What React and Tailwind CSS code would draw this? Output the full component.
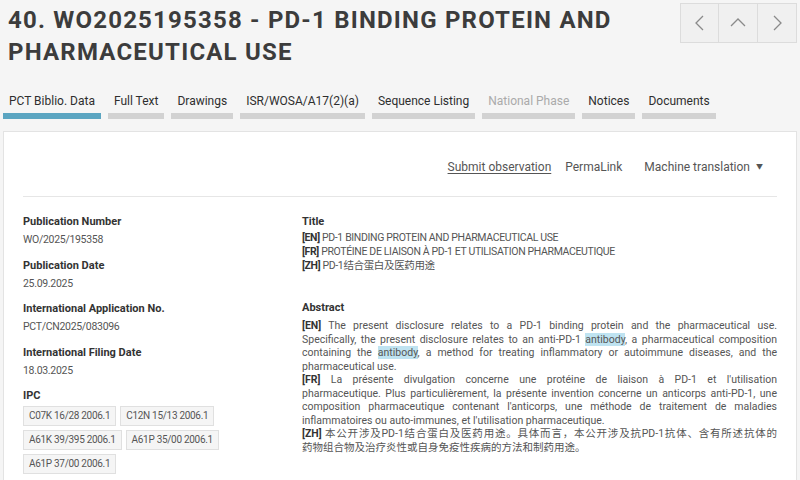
import React from "react";

const F = { fontFamily: "Roboto, 'Noto Sans CJK SC', sans-serif" };

function Chev({ d }) {
  return (
    <svg width="20" height="20" viewBox="0 0 20 20" fill="none" stroke="#8a8a8a" strokeWidth="1.3">
      <polyline points={d} />
    </svg>
  );
}

function Line({ children, last }) {
  return (
    <div className={last ? "text-justify" : "text-justify [text-align-last:justify]"}>{children}</div>
  );
}

const Hi = ({ children }) => <span className="bg-[#bfe3f1]">{children}</span>;

export default function App() {
  const tabs = [
    ["PCT Biblio. Data", "active"],
    ["Full Text", ""],
    ["Drawings", ""],
    ["ISR/WOSA/A17(2)(a)", ""],
    ["Sequence Listing", ""],
    ["National Phase", "dis"],
    ["Notices", ""],
    ["Documents", ""],
  ];
  const chips = [["C07K 16/28 2006.1", "C12N 15/13 2006.1"], ["A61K 39/395 2006.1", "A61P 35/00 2006.1"], ["A61P 37/00 2006.1"]];
  return (
    <div className="w-[800px] h-[480px] overflow-hidden bg-[#f5f5f5] text-[#333]" style={F}>
      <div className="flex justify-between pl-[8px] pr-[3px] pt-[3px]">
        <h1 className="text-[24px] leading-[32px] font-bold tracking-[1.2px] text-[#3c3c3c] pt-[1px] uppercase">
          40. WO2025195358 - PD-1 BINDING PROTEIN AND<br />PHARMACEUTICAL USE
        </h1>
        <div className="flex h-[40px] border border-[#dcdcdc] bg-[#f0f0f0]">
          <div className="w-[38px] flex items-center justify-center border-r border-[#dcdcdc]"><Chev d="13,3 6,10 13,17" /></div>
          <div className="w-[39px] flex items-center justify-center border-r border-[#dcdcdc]"><Chev d="3,13 10,6 17,13" /></div>
          <div className="w-[38px] flex items-center justify-center"><Chev d="7,3 14,10 7,17" /></div>
        </div>
      </div>
      <div className="flex gap-[7px] px-[3px] mt-[25px]">
        {tabs.map(([t, s]) => (
          <div key={t} className="flex flex-col">
            <div className={"px-[6px] text-[12px] leading-[16px] " + (s === "dis" ? "text-[#aaa]" : "text-[#2e2e2e]")}>{t}</div>
            <div className={"h-[6px] mt-[4px] " + (s === "active" ? "bg-[#5ba5c1]" : "bg-[#d2d2d2]")}></div>
          </div>
        ))}
      </div>
      <div className="mx-[3px] mt-[12px] bg-white border border-[#e3e3e3] px-[19px] h-[400px]">
        <div className="flex justify-end items-center pt-[26px] pb-[20px] border-b border-[#e6e6e6] text-[12px] text-[#555] pr-[14px]">
          <span className="underline underline-offset-2">Submit observation</span>
          <span className="ml-[14px]">PermaLink</span>
          <span className="ml-[22px]">Machine translation</span>
          <span className="ml-[6px] text-[7px]">▼</span>
        </div>
        <div className="flex pt-[16px]">
          <div className="w-[279px] shrink-0 text-[10.5px]">
            {[
              ["Publication Number", "WO/2025/195358"],
              ["Publication Date", "25.09.2025"],
              ["International Application No.", "PCT/CN2025/083096"],
              ["International Filing Date", "18.03.2025"],
            ].map(([l, v]) => (
              <div key={l} className="mb-[8.5px]">
                <div className="font-bold text-[#333] text-[11px] leading-[17px]">{l}</div>
                <div className="text-[#555] leading-[17px] mt-[1px] tracking-[-0.3px]">{v}</div>
              </div>
            ))}
            <div className="font-bold text-[#333] text-[11px] leading-[17px]">IPC</div>
            <div className="flex flex-col gap-[4px] mt-[2px]">
              {chips.map((row, i) => (
                <div key={i} className="flex gap-[4px]">
                  {row.map((c) => (
                    <span key={c} className="bg-[#f5f5f5] border border-[#e0e0e0] px-[5px] leading-[18px] text-[10px] tracking-[-0.3px] text-[#555]">{c}</span>
                  ))}
                </div>
              ))}
            </div>
          </div>
          <div className="flex-1 text-[10.5px] text-[#555]">
            <div className="font-bold text-[#333] text-[11px] leading-[17px]">Title</div>
            <div className="leading-[14px] mt-[1px] tracking-[-0.35px]">
              <div><b className="text-[#333]">[EN]</b> PD-1 BINDING PROTEIN AND PHARMACEUTICAL USE</div>
              <div><b className="text-[#333]">[FR]</b> PROTÉINE DE LIAISON À PD-1 ET UTILISATION PHARMACEUTIQUE</div>
              <div><b className="text-[#333]">[ZH]</b> PD-1结合蛋白及医药用途</div>
            </div>
            <div className="font-bold text-[#333] text-[11px] leading-[17px] mt-[26px]">Abstract</div>
            <div className="leading-[13.5px] mt-[3px]">
              <Line><b className="text-[#333]">[EN]</b> The present disclosure relates to a PD-1 binding protein and the pharmaceutical use.</Line>
              <Line>Specifically, the present disclosure relates to an anti-PD-1 <Hi>antibody</Hi>, a pharmaceutical composition</Line>
              <Line>containing the <Hi>antibody</Hi>, a method for treating inflammatory or autoimmune diseases, and the</Line>
              <Line last>pharmaceutical use.</Line>
              <Line><b className="text-[#333]">[FR]</b> La présente divulgation concerne une protéine de liaison à PD-1 et l'utilisation</Line>
              <Line>pharmaceutique. Plus particulièrement, la présente invention concerne un anticorps anti-PD-1, une</Line>
              <Line>composition pharmaceutique contenant l'anticorps, une méthode de traitement de maladies</Line>
              <Line last>inflammatoires ou auto-immunes, et l'utilisation pharmaceutique.</Line>
              <Line><b className="text-[#333]">[ZH]</b> 本公开涉及PD-1结合蛋白及医药用途。具体而言，本公开涉及抗PD-1抗体、含有所述抗体的</Line>
              <Line last>药物组合物及治疗炎性或自身免疫性疾病的方法和制药用途。</Line>
            </div>
          </div>
        </div>
      </div>
    </div>
  );
}
